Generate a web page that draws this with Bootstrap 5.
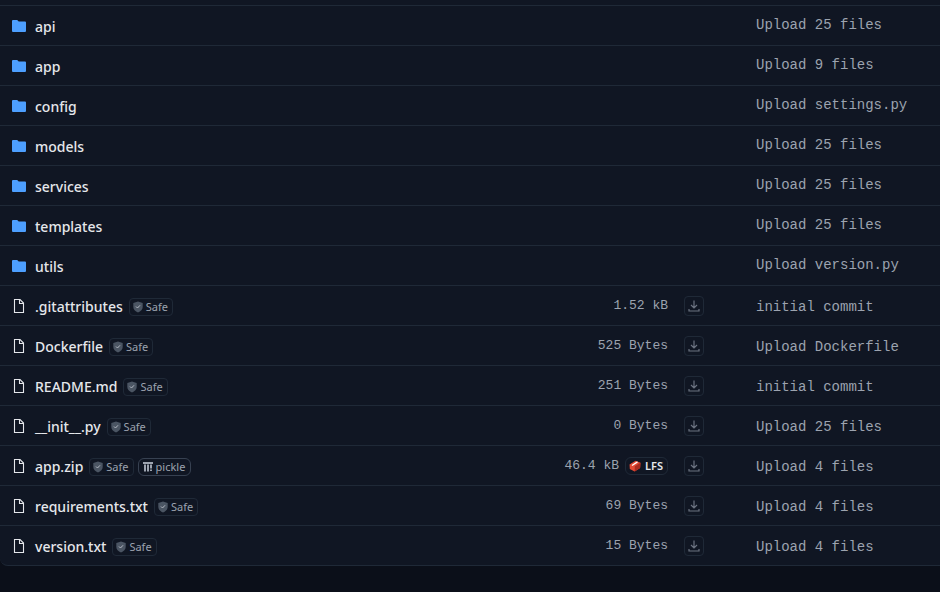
<!DOCTYPE html>
<html lang="en" data-bs-theme="dark">
<head>
<meta charset="utf-8">
<meta name="viewport" content="width=device-width, initial-scale=1">
<title>Files</title>
<link href="https://cdn.jsdelivr.net/npm/bootstrap@5.3.0/dist/css/bootstrap.min.css" rel="stylesheet">
<style>
body{background:#0b0f19;font-family:"Noto Sans","Open Sans",sans-serif;font-size:14px;color:#e5e7eb}
.file-panel{background:#101623;border-bottom:1px solid #1f2937;border-bottom-left-radius:8px;padding-top:5px}
.file-table{table-layout:fixed;border-collapse:separate;border-spacing:0}
.file-table td{height:40px;padding:0;border-top:1px solid #1f2937;vertical-align:middle;white-space:nowrap}
.col-size{width:132px}
.col-get{width:72px}
.col-msg{width:200px}
.file-table .name-cell{padding:2px 0 0 12px}
.name-link{color:#e5e7eb;font-weight:500;line-height:20px}
.entry-icon{width:14px;height:14px;margin-right:9px;margin-bottom:2px;flex:none}
.folder-icon{color:#4d9fff}
.tags{margin-left:6px}
.tag{height:18px;border:1px solid #1f2937;border-radius:4px;font-size:11px;line-height:16px;padding:0 4px 0 3px;color:#9ca3af}
.tag svg{width:10px;height:12px;margin-right:3px}
.tag-strong{border-color:#374151;border-radius:6px;padding:0 5px 0 4px}
.tag-lfs{border-radius:6px;color:#e5e7eb;font-weight:600}
.tag-lfs svg{width:12px;margin-right:4px}
.mono{font-family:"Liberation Mono",monospace;color:#9ca3af}
.size-text{font-size:13px;line-height:20px}
.msg-link{font-size:14px;line-height:20px;color:#9ca3af}
.file-table .msg-cell{padding-left:16px}
.file-table .dir-row .msg-cell{padding:0 0 4px 16px}
.get-btn{width:20px;height:20px;margin-left:16px;border:1px solid #1f2937;border-radius:4px;color:#6b7280}
.get-btn svg{width:12px;height:12px}
</style>
<script src="https://cdn.jsdelivr.net/npm/bootstrap@5.3.0/dist/js/bootstrap.bundle.min.js"></script>
</head>
<body>
<svg class="d-none" aria-hidden="true">
<symbol id="i-folder" viewBox="0 0 14 14"><path fill="currentColor" d="M1 1h4.200l1.500 1.500H13a1 1 0 0 1 1 1V12a1 1 0 0 1-1 1H1a1 1 0 0 1-1-1V2a1 1 0 0 1 1-1z"/></symbol>
<symbol id="i-file" viewBox="0 0 14 14"><path fill="none" stroke="currentColor" stroke-width="1.100" d="M2.500.5H8l3.500 3.500v9.500h-9zM7.500.5v4h4"/></symbol>
<symbol id="i-shield" viewBox="0 0 10 12"><path fill="#4b5563" d="M5 .5 9.700 2v4c0 2.500-2 4.300-4.700 5.500C2.300 10.300.3 8.500.3 6V2z"/><path fill="none" stroke="#b4b9c3" d="m3 5.500 1.500 1.500L7 4.300"/></symbol>
<symbol id="i-get" viewBox="0 0 12 12"><path fill="none" stroke="currentColor" stroke-width="1.200" d="M6 .5V8M3 5l3 3 3-3M1 9v2h10V9"/></symbol>
<symbol id="i-pickle" viewBox="0 0 10 12"><path fill="#9ca3af" d="M0 1h10v2H0zM1 3.500h2v7H1zM4 3.500h2v7H4zM7 3.500h2v4H7zM7 8.500h2v1.500H7z"/></symbol>
<symbol id="i-lfs" viewBox="0 0 12 12"><path fill="#e14a34" d="M.5 4.500 6.500.7l5 2.100-.4 5.300L5.700 11.500.8 9z"/><path fill="#a92b20" d="m5.800 6.200 5.700-3.400-.4 5.300-5.400 3.400z"/><path stroke="#fff" stroke-width="1.300" d="m3 5.500 5.500-3.600"/></symbol>
</svg>
<main class="file-panel">
<table class="file-table w-100" aria-label="Repository files">
<colgroup><col><col class="col-size"><col class="col-get"><col class="col-msg"></colgroup>
<tbody id="rows"></tbody>
</table>
</main>
<script>
const entries=[
["api","Upload 25 files"],["app","Upload 9 files"],["config","Upload settings.py"],["models","Upload 25 files"],["services","Upload 25 files"],["templates","Upload 25 files"],["utils","Upload version.py"],
[".gitattributes","initial commit","1.52 kB"],["Dockerfile","Upload Dockerfile","525 Bytes"],["README.md","initial commit","251 Bytes"],["__init__.py","Upload 25 files","0 Bytes"],["app.zip","Upload 4 files","46.4 kB",true],["requirements.txt","Upload 4 files","69 Bytes"],["version.txt","Upload 4 files","15 Bytes"]];
const icon=(id,cls="")=>`<svg class="${cls}" aria-hidden="true"><use href="#i-${id}"/></svg>`;
const tag=(id,text,cls="")=>`<span class="tag d-inline-flex align-items-center ${cls}">${icon(id)}${text}</span>`;
document.getElementById("rows").innerHTML=entries.map(([name,msg,size,big])=>`
<tr class="${size?"":"dir-row"}"><td class="name-cell"><div class="d-flex align-items-center">${size?icon("file","entry-icon"):icon("folder","entry-icon folder-icon")}<a class="name-link text-decoration-none" href="#">${name}</a>${size?`<span class="tags d-flex gap-1">${tag("shield","Safe")}${big?tag("pickle","pickle","tag-strong"):""}</span>`:""}</div></td>
<td>${size?`<div class="d-flex justify-content-end align-items-center"><span class="mono size-text">${size}</span>${big?`<span class="tags d-flex">${tag("lfs","LFS","tag-lfs")}</span>`:""}</div>`:""}</td>
<td>${size?`<button type="button" class="get-btn bg-transparent p-0 d-flex align-items-center justify-content-center" aria-label="Download ${name}">${icon("get")}</button>`:""}</td>
<td class="msg-cell"><a class="mono msg-link text-decoration-none" href="#">${msg}</a></td></tr>`).join("");
</script>
</body>
</html>
